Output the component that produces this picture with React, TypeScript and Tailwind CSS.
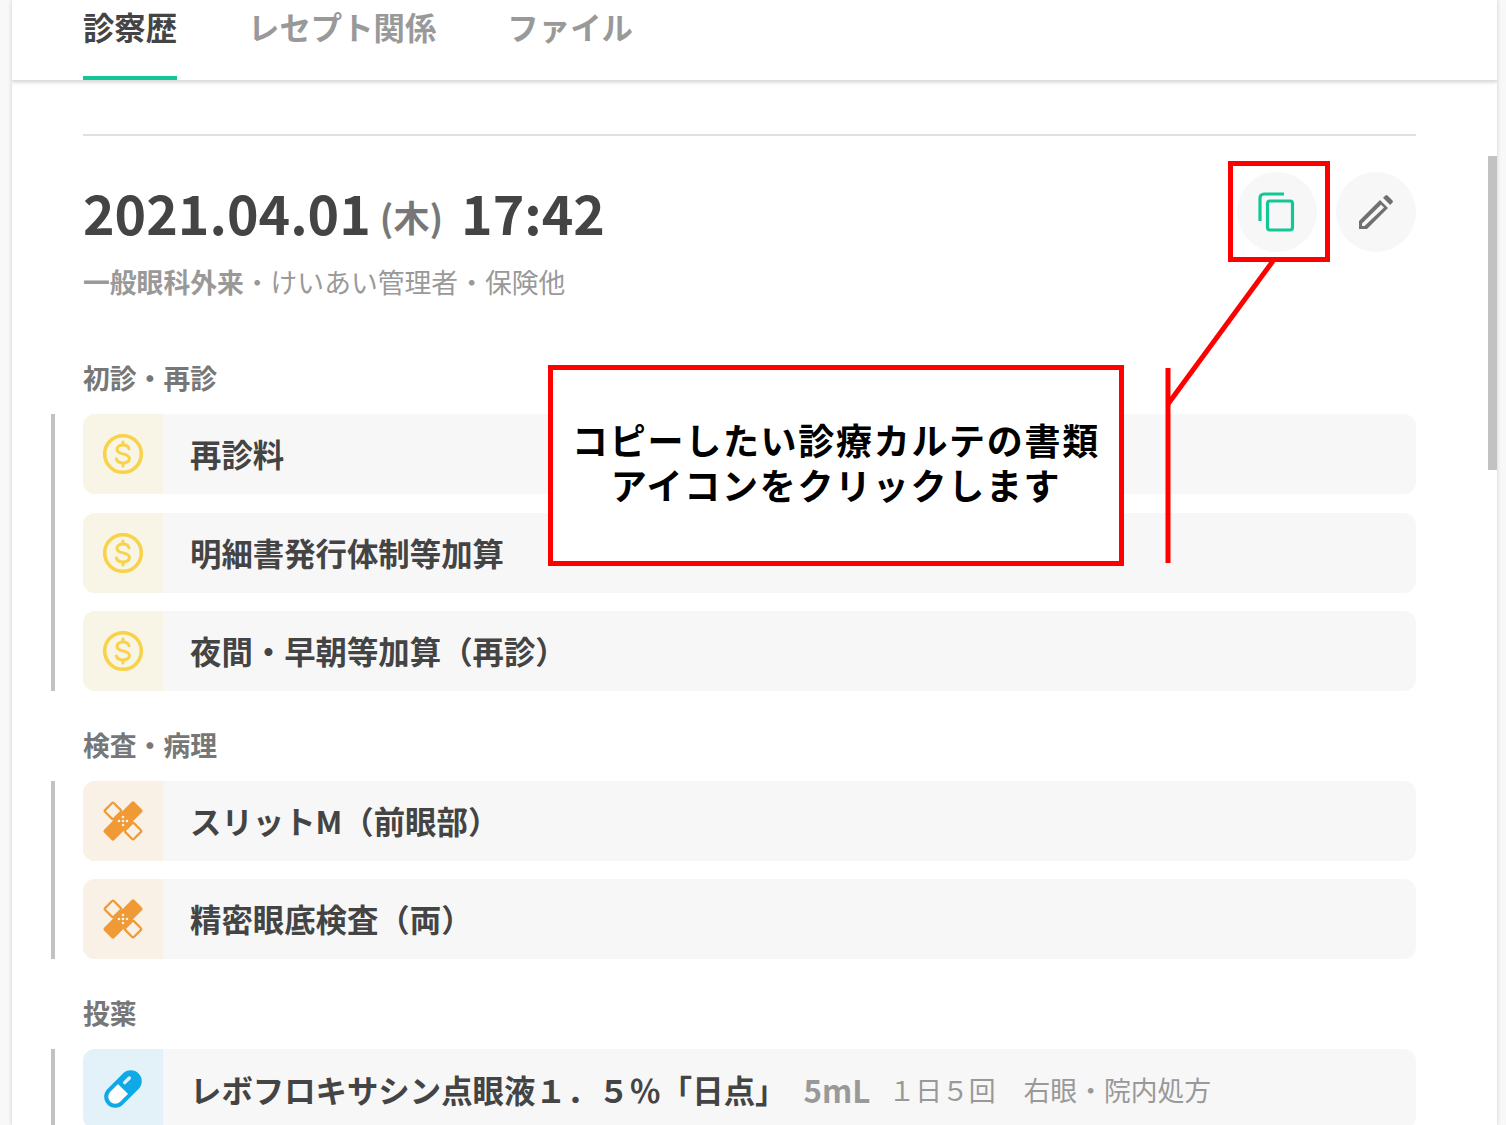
const font = { fontFamily: '"Noto Sans CJK JP", "Noto Sans", sans-serif' };

function Coin() {
  return (
    <svg width="42" height="42" viewBox="0 0 42 42" fill="none">
      <circle cx="21" cy="21" r="18.3" stroke="#f8d24a" strokeWidth="3.600" />
      <path d="M27 15.800c-.6-2.500-3-3.700-6-3.700-3.400 0-6 1.600-6 4.300 0 5.900 12.400 3.100 12.400 9.200 0 2.800-2.700 4.300-6.400 4.300-3.300 0-6-1.300-6.600-4" stroke="#f8d24a" strokeWidth="3" strokeLinecap="round" />
      <path d="M21 9v2.500M21 30.500V33" stroke="#f8d24a" strokeWidth="3" strokeLinecap="round" />
    </svg>
  );
}

function Bandage() {
  return (
    <svg width="42" height="42" viewBox="0 0 42 42">
      <g transform="rotate(-45 21 21)" fill="#ef9a35">
        <rect x="-0.500" y="13.700" width="43" height="14.600" rx="2" />
      </g>
      <g transform="rotate(45 21 21)">
        <rect x="0.600" y="14.800" width="12.400" height="12.400" rx="1.200" fill="#f9f0e6" stroke="#ef9a35" strokeWidth="2.200" />
        <rect x="29" y="14.800" width="12.400" height="12.400" rx="1.200" fill="#f9f0e6" stroke="#ef9a35" strokeWidth="2.200" />
      </g>
      <g fill="#f9f0e6">
        <circle cx="21" cy="17" r="1.300" /><circle cx="17" cy="21" r="1.300" /><circle cx="21" cy="21" r="1.300" /><circle cx="25" cy="21" r="1.300" /><circle cx="21" cy="25" r="1.300" />
      </g>
    </svg>
  );
}

function Pill() {
  return (
    <svg width="42" height="42" viewBox="0 0 42 42" fill="none">
      <g transform="rotate(-45 21 21)">
        <rect x="1" y="12" width="40" height="18" rx="9" fill="#fff" stroke="#0fa9e6" strokeWidth="4" />
        <path d="M21 12h11a9 9 0 0 1 0 18H21z" fill="#0fa9e6" />
        <rect x="25" y="16" width="10" height="3.400" rx="1.700" fill="#e3f1f8" />
      </g>
    </svg>
  );
}

type Item = { icon: "coin" | "band" | "pill"; text: string };

function Row({ icon, children }: { icon: Item["icon"]; children: React.ReactNode }) {
  const bg = icon === "coin" ? "bg-[#f8f5e7]" : icon === "band" ? "bg-[#f9f0e6]" : "bg-[#e3f1f8]";
  return (
    <div className="flex h-20 shrink-0 items-stretch overflow-hidden rounded-xl bg-[#f7f7f7]">
      <div className={`flex w-20 shrink-0 items-center justify-center ${bg}`}>
        {icon === "coin" ? <Coin /> : icon === "band" ? <Bandage /> : <Pill />}
      </div>
      <div className="flex min-w-0 flex-1 items-center whitespace-nowrap pl-[27px] text-[31.4px] font-bold leading-none text-[#444444]">
        {children}
      </div>
    </div>
  );
}

function Group({ label, top, gap, children }: { label: string; top: string; gap: string; children: React.ReactNode }) {
  return (
    <section className={top}>
      <h3 className="h-[50px] text-[26.8px] font-bold leading-[28px] text-[#777777]">{label}</h3>
      <div className="-ml-8 border-l-[4px] border-[#c2c2c2] pl-7">
        <div className={`flex flex-col ${gap}`}>{children}</div>
      </div>
    </section>
  );
}

export default function App() {
  return (
    <div style={font} className="relative h-[1125px] w-[1506px] overflow-hidden bg-[#f8f8f8]">
      <div className="ml-3 h-[1125px] w-[1485px] overflow-hidden bg-white shadow-[0_0_4px_rgba(0,0,0,0.18)]">
        <nav className="flex h-[81px] gap-[71px] whitespace-nowrap border-b border-[#dddddd] pl-[71px] shadow-[0_1px_4px_rgba(0,0,0,0.2)]">
          <div className="flex h-20 w-[94px] justify-center border-b-4 border-[#12c795] pt-[6px] text-[31.4px] font-bold leading-[42px] text-[#444444]">診察歴</div>
          <div className="pt-[6px] text-[31.4px] font-bold leading-[42px] text-[#999999]">レセプト関係</div>
          <div className="pt-[6px] text-[31.4px] font-bold leading-[42px] text-[#999999]">ファイル</div>
        </nav>

        <main className="w-[1404px] pl-[71px]">
          <div className="mt-[53px] h-0.5 w-[1333px] bg-[#e0e0e0]" />

          <div className="flex w-[1333px] justify-between pt-9">
            <div>
              <div className="flex h-[91px] items-center pb-[11px] text-[#444444]">
                <span className="text-[53.6px] font-bold leading-none">2021.04.01</span>
                <span className="ml-[9px] mt-2 text-[36px] font-bold leading-none text-[#777777]">(木)</span>
                <span className="ml-[18px] text-[53.6px] font-bold leading-none">17:42</span>
              </div>
              <div className="text-[26.8px] leading-[38px] text-[#999999]"><span className="font-bold">一般眼科外来</span>・けいあい管理者・保険他</div>
            </div>
            <div className="flex gap-[19px]">
              <button className="flex h-20 w-20 items-center justify-center rounded-full bg-[#f7f7f7]">
                <svg width="40" height="42" viewBox="0 0 40 42" fill="none" stroke="#12c795" strokeWidth="3.200">
                  <path d="M3 30V7a4 4 0 0 1 4-4h20" />
                  <rect x="10.500" y="10" width="25" height="29" rx="2.500" />
                </svg>
              </button>
              <button className="flex h-20 w-20 items-center justify-center rounded-full bg-[#f7f7f7]">
                <svg width="34" height="34" viewBox="0 0 34 34" fill="#707070">
                  <path fillRule="evenodd" d="M0 34v-8L21 5l8 8L8 34zM3 28.500V31h2.500L25 12.500 22 9.800z" />
                  <path d="M24 2.800 26.500.500a1.500 1.500 0 0 1 2 0l5 5a1.500 1.500 0 0 1 0 2L31.200 10z" />
                </svg>
              </button>
            </div>
          </div>

          <Group label="初診・再診" top="mt-[63px]" gap="gap-[18.5px]">
            <Row icon="coin">再診料</Row>
            <Row icon="coin">明細書発行体制等加算</Row>
            <Row icon="coin">夜間・早朝等加算（再診）</Row>
          </Group>
          <Group label="検査・病理" top="mt-10" gap="gap-[18px]">
            <Row icon="band">スリットM（前眼部）</Row>
            <Row icon="band">精密眼底検査（両）</Row>
          </Group>
          <Group label="投薬" top="mt-10" gap="gap-[18px]">
            <Row icon="pill">
              <span className="pt-[2px]">レボフロキサシン点眼液１．５％「日点」</span>
              <span className="ml-[17px] pt-[2px] text-[#999999]">5mL</span>
              <span className="ml-[18px] pt-[2px] text-[26.8px] font-normal text-[#999999]">１日５回</span>
              <span className="ml-7 pt-[2px] text-[26.8px] font-normal text-[#999999]">右眼・院内処方</span>
            </Row>
          </Group>
        </main>
      </div>

      <div className="absolute left-[1488px] top-[156px] h-[314px] w-[9px] bg-[#c2c2c2]" />

      <div className="absolute left-[1228px] top-[161px] h-[101px] w-[102px] border-[5px] border-[#ff0000]" />
      <svg className="absolute left-[1160px] top-[255px]" width="120" height="315" viewBox="0 0 120 315" fill="none" stroke="#ff0000" strokeWidth="5">
        <path d="M113 6 8 149" />
        <path d="M8 113v195" />
      </svg>
      <div className="absolute left-[548px] top-[365px] flex h-[201px] w-[576px] flex-col items-center justify-center border-[5px] border-[#ff0000] bg-white pb-2 text-[36px] font-bold leading-[45px] tracking-[1.7px] text-black">
        <div>コピーしたい診療カルテの書類</div>
        <div>アイコンをクリックします</div>
      </div>
    </div>
  );
}
